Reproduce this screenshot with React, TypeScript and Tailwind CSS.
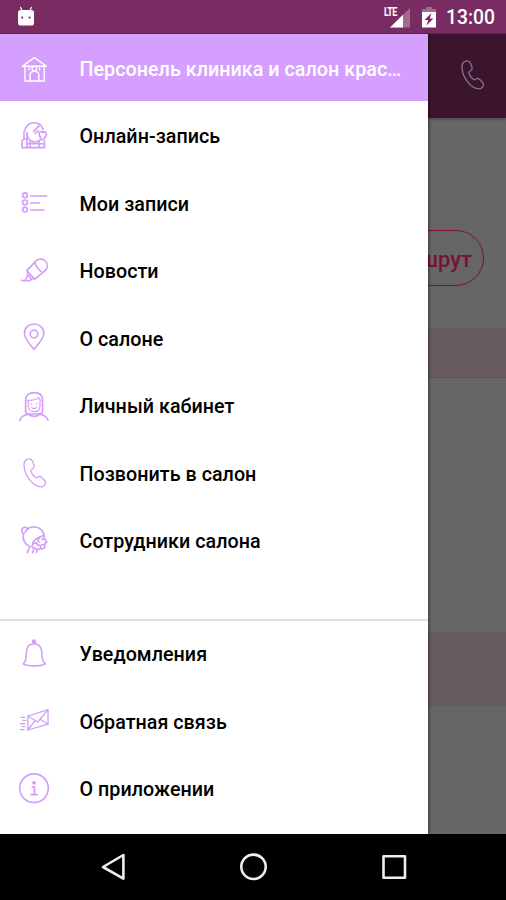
import type { ReactNode } from "react";

const Icon = ({ children }: { children: ReactNode }) => (
  <svg
    viewBox="0 0 36 36"
    className="w-9 h-9 shrink-0"
    fill="none"
    stroke="currentColor"
    strokeWidth="1.6"
    strokeLinecap="round"
    strokeLinejoin="round"
  >
    {children}
  </svg>
);

const PHONE_PATH =
  "M13.6 4.8C10.5 4.6 8 6.8 8 10.5C8 16 10.8 22.8 15 27.4C18 30.8 21.6 32.8 24.6 32.8C27.6 32.8 29.6 30.6 29.6 28.6C29.6 26.8 26 23.4 24 22.4C22.2 21.6 21.4 24.4 19.6 23.6C17.6 22.4 15.4 19 14.8 17C14.4 15.2 17.8 15 18 13C18.2 10.4 16.4 5 13.6 4.8Z";

const mainItems = [
  {
    label: "Онлайн-запись",
    icon: (
      <>
        <path d="M8.8 13.5C10.4 8.4 13.8 5.8 18.2 5.8C22.8 5.8 26 8.4 27.2 12.6M11 16C10.6 20.6 13.6 25 18.6 25C21 25 22.6 24.4 23.8 23" />
        <path d="M6 30.6H28.6M6 30.6V24L8 22V14.4M11 30.6V15.5M8 22H11M14 30.6V25.2M23 30.6V24M28.4 30.6V23.4" />
        <path d="M17.5 14.4L23.4 8.6M19 16.5L22 13.8" />
        <path d="M23.6 18.6C21.8 15 25.6 13.4 26.8 15.6C29 13.8 31.6 16.4 30 18.8C29 21 26 23.4 25 22.4Z" />
        <path d="M11.6 26.8H27.6" />
      </>
    ),
  },
  {
    label: "Мои записи",
    icon: (
      <>
        <circle cx="9" cy="11.3" r="2.4" />
        <circle cx="9" cy="18.4" r="2.4" />
        <circle cx="9" cy="25.6" r="2.4" />
        <path d="M14.7 12H30.6M14.7 19H23.6M14.7 26H28" />
      </>
    ),
  },
  {
    label: "Новости",
    icon: (
      <>
        <path d="M20.4 8.6A6.7 6.7 0 0 1 30 17.8L18.8 27.2L10.8 18.6Z" />
        <path d="M18.8 10.4C19.6 13.6 22 17.2 25.6 19.8" />
        <path d="M11.6 20V23.4L9.4 28M17.4 26.4L14 28.4M11.6 23.6C13.4 23.4 14.8 25.2 14.6 27.2" />
        <path d="M5.6 28.2C7.6 29.2 11 28.8 14.2 28.6" />
      </>
    ),
  },
  {
    label: "О салоне",
    icon: (
      <>
        <path d="M18 30.4C15 26.6 8.4 19.8 8.4 14.4C8.4 9 12.6 5 18 5C23.4 5 27.8 9 27.8 14.4C27.8 19.8 21 26.6 18 30.4Z" />
        <circle cx="18" cy="15" r="3.8" />
      </>
    ),
  },
  {
    label: "Личный кабинет",
    icon: (
      <>
        <path d="M9.6 24V13C9.6 8.4 13 5.6 18.2 5.6C23.4 5.6 26.6 8.4 26.6 13V24C26.6 26.4 24.8 27 23.4 27H12.8C11 27 9.6 26.4 9.6 24Z" />
        <path
          d="M11.6 13.4C15.6 13.4 20 13 22.8 10.6C23.2 12.4 24 13.2 25 13.4M12.2 14V18.4C12.2 22 14.4 24.6 18 24.6C21.8 24.6 24 22 24 18.4V14"
          strokeWidth="1.2"
        />
        <path d="M15.2 16.6V17.2M20.8 16.6V17.2M15.6 20.2C16.6 22 19.8 22 20.6 20.2" strokeWidth="1.2" />
        <path d="M3.8 33.4C4.6 29.6 7.6 28.6 12.6 27C14.6 30 21.6 30 23.6 27C28.4 28.6 31.2 29.6 32 33.4" />
      </>
    ),
  },
  {
    label: "Позвонить в салон",
    icon: <path d={PHONE_PATH} strokeWidth="1.3" />,
  },
  {
    label: "Сотрудники салона",
    icon: (
      <>
        <path d="M7.6 12C4.8 9.8 5.2 5.4 9 5.2C10.6 5.2 11.6 6 12.2 7.2M9 10.4C10.6 7 14 5 18.2 5C23.4 5 27.4 8.4 28 13.2L28.4 16.4L30.8 20L28.8 21.4V24.4C28.6 26.6 26.8 27 24.8 26.8" />
        <path d="M7.6 11.4C6 17.4 9 22.8 14 24.6L12.8 27L11.4 30.6" />
        <path d="M27.4 13.6C23.4 15 18 16.4 16.6 21.4M23.4 16C21.4 17.6 21.4 19.8 23.4 20M26 16.8L27.4 17.4" />
        <path d="M16.8 22.6C18.4 19.8 21.6 20.6 21.4 23.2C24 22.4 25.8 24.4 24.2 26.2C22.4 28.4 19.2 27.4 18.6 25.6C16 26.8 15.2 24.4 16.8 22.6Z" />
        <path d="M17.6 27.6L16.6 30.8M21.2 28.2L20.4 30.6M25.4 22.8H27.6" />
      </>
    ),
  },
];

const extraItems = [
  {
    label: "Уведомления",
    icon: (
      <>
        <circle cx="18" cy="5.6" r="1.5" fill="currentColor" />
        <path d="M8 27C10.4 24.6 10.2 20.4 10.4 16C10.8 10.4 13.6 7.8 18 7.8C22.4 7.8 25.2 10.4 25.8 16C26.2 20.4 25.8 24.6 28.6 27C30 28 28.6 28.6 26.4 29C21 30.2 15.6 30.2 10 29C7.6 28.6 6.6 28 8 27Z" />
      </>
    ),
  },
  {
    label: "Обратная связь",
    icon: (
      <>
        <path d="M12 13L32 6.6V21.2L11.8 27Z" strokeWidth="1.3" />
        <path d="M12 13L21.6 19L32 6.6M11.8 27L19 17.6M24.2 16.2L32 21.2" strokeWidth="1.3" />
        <path d="M5 14.4H9M7 17.4H9.6M4.4 20.6H8.8M6.4 23.6H9M4.4 26.6H8.4" strokeWidth="1.2" />
      </>
    ),
  },
  {
    label: "О приложении",
    icon: (
      <>
        <circle cx="18" cy="17.2" r="14.3" />
        <circle cx="18" cy="11.8" r="1.9" fill="currentColor" stroke="none" />
        <path d="M15.6 15.8H18.4V23.2M14.6 23.6H21.6" strokeWidth="1.8" strokeLinecap="butt" />
      </>
    ),
  },
];

const MenuRow = ({ icon, label }: { icon: ReactNode; label: string }) => (
  <li className="flex items-center h-[67.5px] pl-4 text-[#d39cfb]">
    <Icon>{icon}</Icon>
    <span className="ml-[27.5px] text-[19.7px] leading-6 font-medium text-black tracking-[0.04px] whitespace-nowrap">
      {label}
    </span>
  </li>
);

const StatusBar = () => (
  <header className="flex items-center h-[34px] shrink-0 bg-[#792c62] border-b border-[#6a1c52] text-white">
    <svg viewBox="0 0 20 22" className="w-5 h-[22px] ml-4" fill="currentColor">
      <path d="M4.4 1L6 4.6M15.6 1L14 4.6" stroke="currentColor" strokeWidth="1.2" />
      <path d="M2 6.4C2 5 3 4 4.4 4H15.6C17 4 18 5 18 6.4V17C18 18.6 17 19.6 15.6 19.6H4.4C3 19.6 2 18.6 2 17Z" />
      <circle cx="6.2" cy="11.6" r="1.1" fill="#792c62" />
      <circle cx="13.6" cy="11.6" r="1.1" fill="#792c62" />
    </svg>
    <div className="flex items-center ml-auto pr-[11px]">
      <div className="relative w-7 h-[22px]">
        <svg viewBox="0 0 28 22" className="w-7 h-[22px]">
          <path d="M26 2V21.5H6Z" fill="#a06c90" />
          <path d="M19 8.8V21.5H6Z" fill="#fff" />
          <path d="M0 0H14.5V11H0Z" fill="#792c62" />
        </svg>
        <span className="absolute left-0 top-px text-[12px] leading-[11px] font-bold tracking-[-0.8px] scale-x-75 origin-left">
          LTE
        </span>
      </div>
      <svg viewBox="0 0 16 22" className="w-4 h-[22px] ml-[9px]">
        <path d="M5 1H11V3H15V7H1V3H5Z" fill="#a06c90" />
        <path d="M1 6H15V21.5H1Z" fill="#fff" />
        <path d="M10.4 7L3.6 14H7.2L5.6 19.6L12.4 12.4H8.8Z" fill="#792c62" />
      </svg>
      <span className="ml-[9px] pt-[3px] text-[19.3px] leading-6 font-medium">13:00</span>
    </div>
  </header>
);

// Salon page that stays dimmed behind the open drawer
const DimmedPage = () => (
  <div className="h-full flex flex-col bg-[#666666]">
    <div className="flex justify-end items-center h-[84px] shrink-0 bg-[#3b152e] pb-[5px] pr-4 text-[#87748a] shadow-[0_1px_3px_rgba(0,0,0,0.35)]">
      <Icon>
        <path d={PHONE_PATH} strokeWidth="1.3" />
      </Icon>
    </div>
    <div className="flex justify-end h-[210px] shrink-0 pt-[112px] pr-[22px]">
      <div className="flex items-center justify-end w-[200px] h-[56px] rounded-full border border-[#7a1037] pt-[3px] pr-[11px] text-[22px] font-medium text-[#7a1037]">
        Маршрут
      </div>
    </div>
    <div className="h-[50px] shrink-0 bg-[#675a5d] border-b border-[#5a5557]" />
    <div className="h-[254px] shrink-0" />
    <div className="h-[74px] shrink-0 bg-[#675a5d]" />
  </div>
);

const Drawer = () => (
  <nav className="absolute left-0 top-0 w-[428px] h-full flex flex-col bg-white shadow-[1px_0_3px_rgba(0,0,0,0.45)]">
    <div className="flex items-center h-[67px] shrink-0 pl-4 bg-[#d59fff] text-white">
      <Icon>
        <path d="M6.4 16.2L18.3 7.6L30.4 16.2M9 15.4V31H28.2V15.4M6.4 16.2H30.4" strokeWidth="1.4" />
        <circle cx="18.3" cy="18.6" r="2.4" strokeWidth="1.4" />
        <path
          d="M14 31V24.6C14 22.4 15.8 21.4 18.4 21.4C21 21.4 22.8 22.4 22.8 24.6V31M13 18V20M23.6 18V20"
          strokeWidth="1.4"
        />
      </Icon>
      <span className="ml-[27.5px] pt-[5px] text-[19.7px] leading-6 font-medium tracking-[0.04px] whitespace-nowrap">
        Персонель клиника и салон крас…
      </span>
    </div>
    <ul className="h-[518px] shrink-0 [&_span]:pt-[5px]">
      {mainItems.map((item) => (
        <MenuRow key={item.label} {...item} />
      ))}
    </ul>
    <hr className="shrink-0 border-t-2 border-[#e0e0e0]" />
    <ul className="-mt-px [&_span]:pt-[3px]">
      {extraItems.map((item) => (
        <MenuRow key={item.label} {...item} />
      ))}
    </ul>
  </nav>
);

const NavigationBar = () => (
  <footer className="flex items-center h-[66px] shrink-0 bg-black text-[#eeeeee]">
    <svg
      viewBox="0 0 506 66"
      className="w-full h-full"
      fill="none"
      stroke="currentColor"
      strokeWidth="2.6"
      strokeLinejoin="round"
    >
      <path d="M123.4 21V44.6L103 33Z" />
      <circle cx="253.5" cy="32.8" r="12.2" />
      <rect x="383.5" y="22.2" width="21.5" height="21.5" />
    </svg>
  </footer>
);

const App = () => {
  return (
    <div className="flex flex-col w-[506px] h-[900px] overflow-hidden font-[Roboto,sans-serif]">
      <StatusBar />
      <main className="relative flex-1 min-h-0 overflow-hidden">
        <DimmedPage />
        <Drawer />
      </main>
      <NavigationBar />
    </div>
  );
};

export default App;
